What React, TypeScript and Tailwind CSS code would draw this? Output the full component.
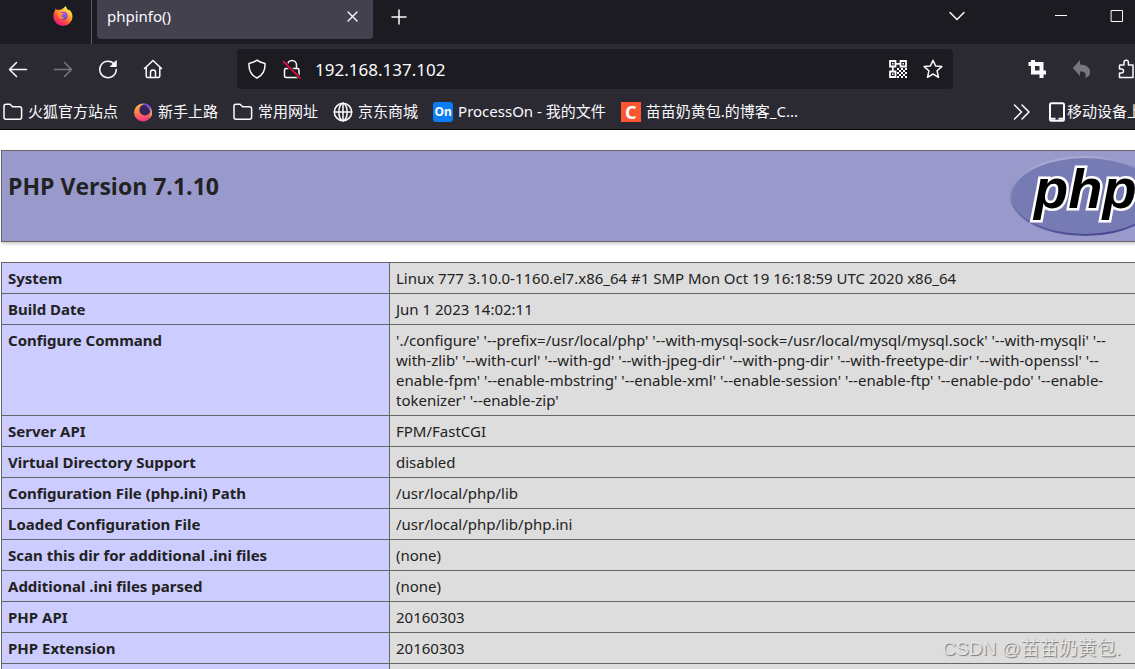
import type { ReactNode } from 'react'

const rows: [string, ReactNode][] = [
  ['System', 'Linux 777 3.10.0-1160.el7.x86_64 #1 SMP Mon Oct 19 16:18:59 UTC 2020 x86_64'],
  ['Build Date', 'Jun 1 2023 14:02:11'],
  [
    'Configure Command',
    <>
      './configure' '--prefix=/usr/local/php' '--with-mysql-sock=/usr/local/mysql/mysql.sock' '--with-mysqli' '--
      <br />
      with-zlib' '--with-curl' '--with-gd' '--with-jpeg-dir' '--with-png-dir' '--with-freetype-dir' '--with-openssl' '--
      <br />
      enable-fpm' '--enable-mbstring' '--enable-xml' '--enable-session' '--enable-ftp' '--enable-pdo' '--enable-
      <br />
      tokenizer' '--enable-zip'
    </>,
  ],
  ['Server API', 'FPM/FastCGI'],
  ['Virtual Directory Support', 'disabled'],
  ['Configuration File (php.ini) Path', '/usr/local/php/lib'],
  ['Loaded Configuration File', '/usr/local/php/lib/php.ini'],
  ['Scan this dir for additional .ini files', '(none)'],
  ['Additional .ini files parsed', '(none)'],
  ['PHP API', '20160303'],
  ['PHP Extension', '20160303'],
  ['', ''],
]

function Icon({ children, className = 'size-5' }: { children: ReactNode; className?: string }) {
  return (
    <svg
      aria-hidden="true"
      className={`shrink-0 ${className}`}
      viewBox="0 0 20 20"
      fill="none"
      stroke="currentColor"
      strokeWidth="1.5"
      strokeLinecap="round"
      strokeLinejoin="round"
    >
      {children}
    </svg>
  )
}

function FirefoxLogo() {
  return (
    <svg aria-hidden="true" className="size-5 shrink-0" viewBox="0 0 20 20">
      <defs>
        <linearGradient id="ff-body" x1="0.8" y1="0.1" x2="0.25" y2="0.95">
          <stop offset="0" stopColor="#fff44f" />
          <stop offset="0.35" stopColor="#ffa436" />
          <stop offset="0.65" stopColor="#ff4f3d" />
          <stop offset="1" stopColor="#e31587" />
        </linearGradient>
        <radialGradient id="ff-globe" cx="0.6" cy="0.3" r="0.8">
          <stop offset="0" stopColor="#a45cf0" />
          <stop offset="1" stopColor="#5b33c8" />
        </radialGradient>
      </defs>
      <path
        d="M12.2 0c1.2 1 1.7 2 1.9 3 1 .3 1.7 .9 2.2 1.6l.5-.6c1.6 1.7 2.7 4.2 2.7 6.6A9.5 9.3 0 0 1 .4 10.700C.4 8 1 5.800 2.200 4.300L2.400 2.500 4.500 4.200c1-.5 2-.6 3.100-.4L9.400 2.700c1.500-.7 2.500-1.600 2.800-2.700Z"
        fill="url(#ff-body)"
      />
      <circle cx="10.500" cy="9.800" r="4" fill="url(#ff-globe)" />
      <path d="M3.500 6.500c2-1.200 3.600-.8 4.700.3l2.600.4c-.4 1.200-1.700 1.500-2.300 2-.3 1.800 1 2.600 3 2-1 2-4 2.500-5.500.8C4.500 10.500 4.800 8 3.500 6.500Z" fill="#ff8f2e" />
    </svg>
  )
}

function FirefoxRing() {
  return (
    <svg aria-hidden="true" className="size-5 shrink-0" viewBox="0 0 20 20">
      <defs>
        <linearGradient id="ring" x1="0.4" y1="0" x2="0.5" y2="1">
          <stop offset="0" stopColor="#ffb84a" />
          <stop offset="0.5" stopColor="#ff7a50" />
          <stop offset="1" stopColor="#f5308a" />
        </linearGradient>
        <linearGradient id="ring-edge" x1="0" y1="0" x2="0.6" y2="1">
          <stop offset="0" stopColor="#7a3ff0" />
          <stop offset="0.5" stopColor="#8a4fd8" />
          <stop offset="1" stopColor="#ffbd4f" />
        </linearGradient>
      </defs>
      <circle cx="10" cy="10.500" r="9" fill="url(#ring)" />
      <circle cx="12" cy="7.800" r="5.600" fill="#33265a" />
      <path d="M8 1.500c6-1.500 11.500 3 11 9.500-.2 2.500-1 4-2 5 1-3 1-6-.5-8.500C14.800 4.500 12 2.500 8 1.500Z" fill="url(#ring-edge)" />
    </svg>
  )
}

function FolderIcon() {
  return (
    <Icon>
      <path d="M1 4.200C1 3 1.800 2.200 3 2.200h4l2.600 2.600h7c1.200 0 2 .8 2 2v8.400c0 1.200-.8 2-2 2H3c-1.200 0-2-.8-2-2Z" />
    </Icon>
  )
}

function GlobeIcon() {
  return (
    <Icon>
      <circle cx="10" cy="10" r="8.700" />
      <ellipse cx="10" cy="10" rx="4.200" ry="8.700" />
      <path d="M10 1.300v17.400M1.300 10h17.400" />
    </Icon>
  )
}

function QrIcon() {
  return (
    <Icon>
      <g strokeWidth="1.800" strokeLinejoin="miter" strokeLinecap="butt">
        <path d="M2 2h5.500v5.500H2ZM12.500 2H18v5.500h-5.500ZM2 12.500h5.500V18H2Z" />
        <path d="M8 4.800h4M4.800 8v4" />
        <path d="M9 10h10M9 14h10M9 18h10" strokeDasharray="2 2" />
        <path d="M11 12h8M11 16h8" strokeDasharray="2 2" />
      </g>
      <path d="M4 4h1.500v1.500H4ZM14.500 4H16v1.500h-1.500ZM4 14.500h1.500V16H4Z" fill="currentColor" stroke="none" />
    </Icon>
  )
}

function PhpLogo() {
  return (
    <svg role="img" aria-label="PHP logo" className="h-20 w-[150px] shrink-0" viewBox="0 0 150 80">
      <defs>
        <linearGradient id="rim" x1="0.3" y1="0" x2="0.6" y2="1">
          <stop offset="0" stopColor="#aeb2d9" />
          <stop offset="0.5" stopColor="#7377ad" />
          <stop offset="1" stopColor="#484893" />
        </linearGradient>
      </defs>
      <ellipse cx="75" cy="40" rx="75" ry="40" fill="url(#rim)" />
      <ellipse cx="75" cy="40" rx="73" ry="38" fill="#777bb3" />
      <text
        x="24"
        y="52"
        fontFamily="Liberation Sans, sans-serif"
        fontSize="56"
        fontWeight="700"
        fontStyle="italic"
        fill="#000"
        stroke="#fff"
        strokeWidth="5"
        strokeLinejoin="miter"
        paintOrder="stroke"
      >
        php
      </text>
    </svg>
  )
}

function TabStrip() {
  return (
    <div className="flex h-11 bg-[#1c1b22]">
      <button aria-label="Firefox" className="flex w-[92px] justify-end border-r border-[#5b5b66] pt-1.5 pr-[18px]">
        <FirefoxLogo />
      </button>
      <div className="ml-[5px] flex h-[39px] w-[276px] justify-between rounded-b bg-[#42414d] pr-[11px] pb-1.5 pl-2.5">
        <button className="text-[15px]">phpinfo()</button>
        <button aria-label="关闭标签页">
          <Icon className="size-[18px]">
            <path d="M4.500 4.500l10 10M14.500 4.500l-10 10" />
          </Icon>
        </button>
      </div>
      <button aria-label="新建标签页" className="ml-4 h-[33px]">
        <Icon>
          <path d="M10 3v14M3 10h14" />
        </Icon>
      </button>
      <div className="mr-[41px] ml-auto flex h-8 items-center">
        <button aria-label="列出所有标签页" className="mr-[84px]">
          <Icon>
            <path d="M3 6.500l7 7 7-7" />
          </Icon>
        </button>
        <button aria-label="最小化" className="mr-9">
          <Icon>
            <path d="M4 9.500h12" strokeWidth="1" strokeLinecap="butt" />
          </Icon>
        </button>
        <button aria-label="最大化">
          <Icon>
            <path d="M4.500 4.500h11v11h-11Z" strokeWidth="1" strokeLinejoin="miter" />
          </Icon>
        </button>
      </div>
    </div>
  )
}

function NavBar() {
  return (
    <div className="flex items-center pt-[5px] pr-[31px] pl-2">
      <div className="flex gap-[25px]">
        <button aria-label="后退">
          <Icon>
            <path d="M18.500 10.500h-17M8.500 3.500l-7 7 7 7" />
          </Icon>
        </button>
        <button aria-label="前进" className="text-[#77767e]">
          <Icon>
            <path d="M1.500 10.500h17M11.500 3.500l7 7-7 7" />
          </Icon>
        </button>
        <button aria-label="刷新">
          <Icon>
            <path d="M16.500 5.500A8.200 8.200 0 1 0 18.200 10.500" />
            <path d="M18.200 2v5.500h-5.500Z" fill="currentColor" strokeWidth="1" />
          </Icon>
        </button>
        <button aria-label="主页">
          <Icon>
            <path d="M1.500 9.500L10 1.500l8.500 8M3.200 8.500V17c0 1 .6 1.500 1.500 1.500h10.600c.9 0 1.500-.5 1.500-1.500V8.500M7.500 18.500v-5a2.500 2.500 0 0 1 5 0v5" />
          </Icon>
        </button>
      </div>
      <div className="ml-[74px] flex h-10 flex-1 items-center rounded bg-[#1c1b22] px-2.5">
        <button aria-label="跟踪保护">
          <Icon>
            <path d="M10 1.200c2.500 2 5 2.600 8 3.300.3 6-1.500 11.500-8 14.500-6.500-3-8.300-8.500-8-14.500 3-.7 5.500-1.300 8-3.300Z" />
          </Icon>
        </button>
        <button aria-label="连接不安全" className="ml-[15px]">
          <Icon>
            <path d="M5.500 6a4.500 4.500 0 0 1 9 0v3M4 9.500h11.500c1 0 1.500.6 1.500 1.500v6c0 1-.5 1.500-1.500 1.500H4c-1 0-1.500-.5-1.500-1.500v-6c0-.9.500-1.500 1.500-1.500Z" />
            <path d="M1.500 2.500l16.500 16.500" stroke="#1c1b22" strokeWidth="3.500" strokeLinecap="butt" />
            <path d="M1.500 2.500l16.500 16.500" stroke="#ff0f3f" strokeWidth="1.600" />
          </Icon>
        </button>
        <input
          aria-label="地址"
          className="ml-[13px] min-w-0 flex-1 pt-px text-[17px] outline-none"
          defaultValue="192.168.137.102"
        />
        <button aria-label="二维码">
          <QrIcon />
        </button>
        <button aria-label="收藏" className="ml-[15px]">
          <Icon>
            <path d="M10 1.200l2.600 5.800 6.200.6-4.700 4.200 1.400 6.500L10 15l-5.500 3.300 1.400-6.500L1.200 7.600l6.200-.6Z" />
          </Icon>
        </button>
      </div>
      <div className="ml-[74px] flex gap-[25px]">
        <button aria-label="截图">
          <Icon>
            <path d="M6 1v12.500h13M1.500 5h13v14" strokeWidth="4" strokeLinecap="butt" strokeLinejoin="miter" />
          </Icon>
        </button>
        <button aria-label="撤销" className="text-[#77767e]">
          <Icon>
            <path d="M8 1v4.500c7 0 11 4 10 9-.5 2-2 3.500-5 4.500 1.800-4 .5-6.500-5-6.500V17L.8 9Z" fill="currentColor" stroke="none" />
          </Icon>
        </button>
        <button aria-label="扩展">
          <Icon>
            <path d="M3 6h4V3.500a2.200 2.200 0 0 1 4.400 0V6H16v12.500H2.500V14h2a2 2 0 0 0 0-4h-2V6.500Z" />
          </Icon>
        </button>
      </div>
    </div>
  )
}

function Bookmark({ icon, label }: { icon: ReactNode; label: string }) {
  return (
    <a href="#" className="flex items-center gap-[5px] whitespace-nowrap">
      {icon}
      {label}
    </a>
  )
}

function BookmarksBar() {
  return (
    <nav className="flex h-[41px] items-center border-b border-[#0c0c0d] pt-[5px] pr-[26px] pl-[3px] text-[15px]">
      <div className="flex gap-[15px]">
        <Bookmark icon={<FolderIcon />} label="火狐官方站点" />
        <Bookmark icon={<FirefoxRing />} label="新手上路" />
        <Bookmark icon={<FolderIcon />} label="常用网址" />
        <Bookmark icon={<GlobeIcon />} label="京东商城" />
        <Bookmark
          icon={
            <span className="flex size-5 items-center justify-center rounded-[3px] bg-[#0a7cf5] text-xs font-bold">
              On
            </span>
          }
          label="ProcessOn - 我的文件"
        />
        <Bookmark
          icon={<span className="flex size-5 items-center justify-center bg-[#fc5531] text-lg font-bold">C</span>}
          label="苗苗奶黄包.的博客_C..."
        />
      </div>
      <button aria-label="更多书签" className="mr-[15px] ml-auto">
        <Icon>
          <path d="M2.500 3l7 7-7 7M10 3l7 7-7 7" />
        </Icon>
      </button>
      <a href="#" className="flex items-center whitespace-nowrap">
        <Icon>
          <path
            d="M4.500 1.200h11c1 0 1.500.6 1.500 1.500v14.600c0 1-.5 1.500-1.500 1.500h-11c-1 0-1.500-.5-1.500-1.500V2.700c0-.9.500-1.500 1.500-1.500Z"
            strokeWidth="2"
          />
          <path d="M3.500 16.800h5M11.500 16.800h5" strokeWidth="2" strokeLinecap="butt" />
        </Icon>
        移动设备上
      </a>
    </nav>
  )
}

export default function App() {
  return (
    <div className="relative h-screen overflow-hidden bg-white font-['Noto_Sans','Noto_Sans_CJK_SC',sans-serif]">
      <div className="min-w-[1168px]">
        <header className="bg-[#2b2a33] text-[#fbfbfe]">
          <TabStrip />
          <NavBar />
          <BookmarksBar />
        </header>
        <main className="px-px py-5 text-[15px] leading-5 text-[#222]">
          <div className="flex items-start justify-between border border-[#666] bg-[#9999cc] px-1.5 py-[5px] shadow-[1px_2px_3px_#ccc]">
            <h1 className="mt-3.5 font-['Open_Sans',sans-serif] text-[23px] leading-8 font-bold">PHP Version 7.1.10</h1>
            <PhpLogo />
          </div>
          <table className="mt-5 w-full table-fixed border-collapse">
            <tbody>
              {rows.map(([name, value]) => (
                <tr key={name} className="h-[31px]">
                  <th scope="row" className="w-[388px] border border-[#666] bg-[#ccccff] px-1.5 py-[5px] text-left align-top font-bold">
                    {name}
                  </th>
                  <td className="border border-[#666] bg-[#ddd] px-1.5 py-[5px] align-top whitespace-nowrap">{value}</td>
                </tr>
              ))}
            </tbody>
          </table>
        </main>
      </div>
      <p className="absolute right-3.5 bottom-1.5 font-['Liberation_Sans','Noto_Sans_CJK_SC',sans-serif] text-[19px] text-[#e4e4e4] [text-shadow:1px_1px_1px_#777]">
        CSDN @苗苗奶黄包.
      </p>
    </div>
  )
}
